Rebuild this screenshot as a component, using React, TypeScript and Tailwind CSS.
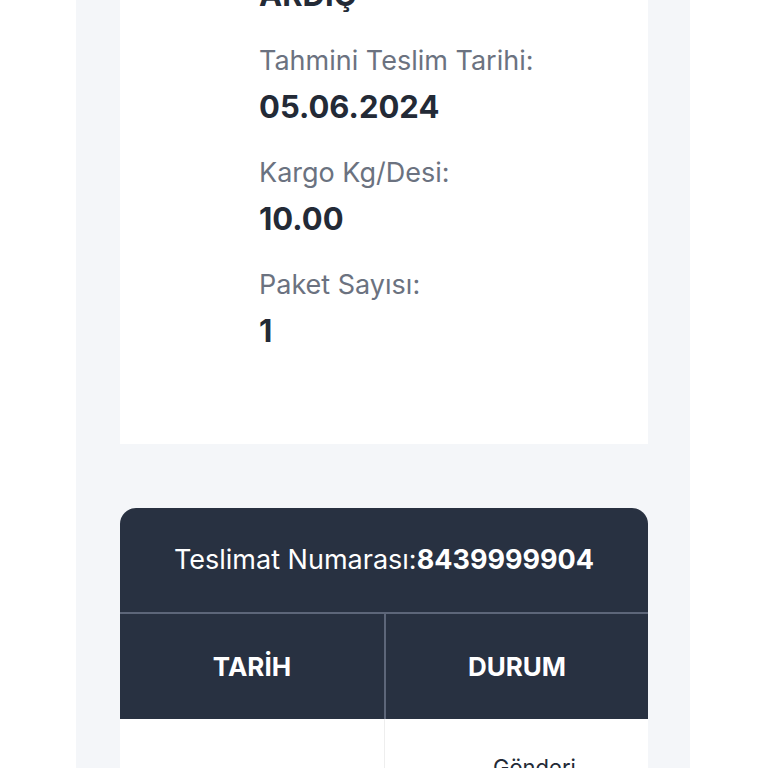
const FIELDS = [
  { label: 'Tahmini Teslim Tarihi:', value: '05.06.2024' },
  { label: 'Kargo Kg/Desi:', value: '10.00' },
  { label: 'Paket Sayısı:', value: '1' },
];

export default function App() {
  return (
    <div className="min-h-screen bg-white font-['Inter',sans-serif]">
      <div className="ml-[76px] flex w-[614px] flex-col bg-[#f4f6f9] pb-10 pl-[44px]">
        {/* Detail card */}
        <div className="-mt-[23px] w-[528px] bg-white pb-[95px] pl-[139px]">
          <div className="text-[31px] font-bold leading-[36px] text-[#232a36]">ARDIÇ</div>
          {FIELDS.map((f) => (
            <div key={f.label} className="mt-[32px]">
              <div className="text-[27px] leading-[32px] text-[#6b7280]">{f.label}</div>
              <div className="mt-[12px] text-[31px] font-bold leading-[36px] text-[#232a36]">{f.value}</div>
            </div>
          ))}
        </div>

        {/* Tracking table */}
        <div className="mt-16 w-[528px] overflow-hidden rounded-t-2xl">
          <div className="flex h-[106px] items-center justify-center border-b-2 border-[#5d6679] bg-[#283141] text-[27px] text-white">
            <span>Teslimat Numarası:</span>
            <span className="font-bold">8439999904</span>
          </div>
          <div className="grid h-[105px] grid-cols-2 bg-[#283141] text-[26px] font-bold text-white">
            <div className="flex items-center justify-center">TARİH</div>
            <div className="flex items-center justify-center border-l-2 border-[#5d6679]">DURUM</div>
          </div>
          <div className="grid grid-cols-2 bg-white text-[22px] text-[#232a36]">
            <div className="h-[120px]"></div>
            <div className="border-l border-[#eeeeee] pl-[108px] pt-[32px]">Gönderi</div>
          </div>
        </div>
      </div>
    </div>
  );
}
